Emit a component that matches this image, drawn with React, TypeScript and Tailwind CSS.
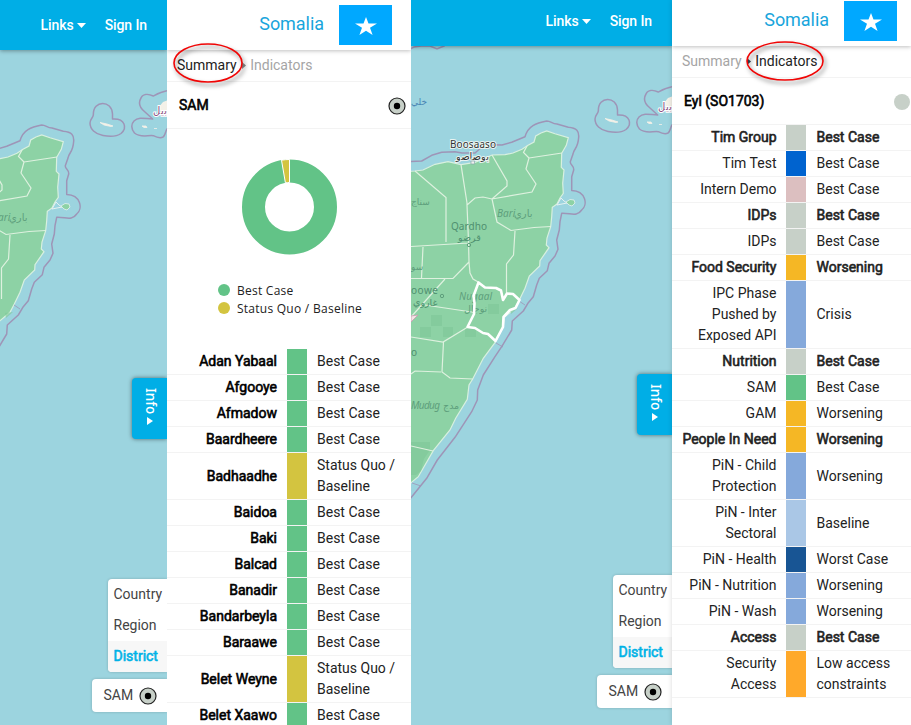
import { clsx } from "clsx";

type Row = { label: string; value: string; color: string; bold?: boolean };

const GREEN = "bg-[#62c387]";
const YELLOW = "bg-[#d3c440]";
const GREY = "bg-[#c7d0c8]";
const AMBER = "bg-[#f5b725]";
const SKY = "bg-[#85a9db]";

// Regular-weight glyphs thickened with a stroke, so bold rows keep the regular widths.
const HEAVY = "[-webkit-text-stroke:0.6px_currentColor]";

const best = (label: string): Row => ({ label, value: "Best Case", color: GREEN });

const districts: Row[] = [
  best("Adan Yabaal"),
  best("Afgooye"),
  best("Afmadow"),
  best("Baardheere"),
  { label: "Badhaadhe", value: "Status Quo /\nBaseline", color: YELLOW },
  best("Baidoa"),
  best("Baki"),
  best("Balcad"),
  best("Banadir"),
  best("Bandarbeyla"),
  best("Baraawe"),
  { label: "Belet Weyne", value: "Status Quo /\nBaseline", color: YELLOW },
  best("Belet Xaawo"),
];

const indicators: Row[] = [
  { label: "Tim Group", value: "Best Case", color: GREY, bold: true },
  { label: "Tim Test", value: "Best Case", color: "bg-[#0063cf]" },
  { label: "Intern Demo", value: "Best Case", color: "bg-[#dcbfc0]" },
  { label: "IDPs", value: "Best Case", color: GREY, bold: true },
  { label: "IDPs", value: "Best Case", color: GREY },
  { label: "Food Security", value: "Worsening", color: AMBER, bold: true },
  { label: "IPC Phase\nPushed by\nExposed API", value: "Crisis", color: SKY },
  { label: "Nutrition", value: "Best Case", color: GREY, bold: true },
  { label: "SAM", value: "Best Case", color: GREEN },
  { label: "GAM", value: "Worsening", color: AMBER },
  { label: "People In Need", value: "Worsening", color: AMBER, bold: true },
  { label: "PiN - Child\nProtection", value: "Worsening", color: SKY },
  { label: "PiN - Inter\nSectoral", value: "Baseline", color: "bg-[#aac7e6]" },
  { label: "PiN - Health", value: "Worst Case", color: "bg-[#185594]" },
  { label: "PiN - Nutrition", value: "Worsening", color: SKY },
  { label: "PiN - Wash", value: "Worsening", color: SKY },
  { label: "Access", value: "Best Case", color: GREY, bold: true },
  { label: "Security\nAccess", value: "Low access\nconstraints", color: "bg-[#ffa92a]" },
];

const COAST =
  "M400 172 L415 171 423 170 435 164.3 448 161.7 461 164.7 475 162.3 485 158.3 492 155 505 154.7 513 153 522 149.3 528 145.3 534 142 535.7 136 541 133 546.7 131 555 133.7 568.3 137.7 566.3 145.3 561.7 153.3 561.3 167.3 564 170 562.7 183.3 563.3 193.3 560 198 557 204 552.3 207.3 551.7 216.7 550.7 226.7 547 238 546.3 245 549 247.7 540 260.7 539.7 266 529.3 276 525 288.3 519.3 300 515 308.3 504.3 317.3 503.3 326.7 495.7 341.7 483.3 358.3 472.7 379 469 385 467.3 399.3 455.7 418.3 450 430 433.3 450.7 418.3 476.7 411 482.7 400 490 Z";

const MARITIME =
  "M405 161.7 L421.7 161 431.7 155.3 441.7 152.3 455 151.7 462 153 475 153 482 147 495.7 144.7 502 145 511.7 142.3 525 136.7 C528 126 536 123 546.7 121 C551 121 552 124 557 124 L568.3 127.3 C577 128 579 131 578.7 137 C578 149 574 148 573 154 L570.3 161.7 C570 165 574 165 573.7 170 L571.7 176.7 571.7 190.500 C586 191 588 205 581.7 210 C577 217 571 213 561.7 213.3 L560 221.7 559.3 230 556.7 240 558 249.3 555 256 549 263.3 547.3 270.7 539.3 278.3 536.7 285 533.3 296.7 528.3 302.7 523.3 311 512.3 321 511.7 330 501.7 346.7 495 356.7 483.3 375 477.7 390 477.3 400 471.7 411.7 455 437.3 437.3 460 426.7 478.3 411 497.7 405 504";

const DISTRICT_LINES =
  "M415 171 L446 197.5 V242 M461 164.7 L467 203 V205 L468.5 241 469 262 470 273 473 279 480 283 M467 205 L475 198 483 197 492 199 532 192 536 184 526 169 529 158 523.5 152.5 527 146 M529 158 L562 153 M492 155 L507 181 507 186 492 199 497 222 511 230.5 534 227.5 551 226.5 M515 231 L513.5 255 506.5 264 V295 M411 246.5 L468.5 243 M423 247 L421.5 278 M411 278.5 H453 L469 262 M445 279 L411 317 M425 305 L475 312.5 M411 337 L443 342 467 327.5 M443.5 342 L442 372 450 378 473 379 M411 374 L415 371 441 372 M411 446 L433 451";

function MapView({ viewBox, selected }: { viewBox: string; selected?: boolean }) {
  return (
    <svg className="absolute inset-0 size-full" viewBox={viewBox} preserveAspectRatio="xMinYMin slice">
      <path d={COAST} fill="#8dd2a5" stroke="#d8f0df" strokeWidth="1.2" />
      <g fill="#7fc898" opacity="0.6">
        <path d="M431 315h11v11h-11zM420 327h11v10h-11zM443 327h10v10h-10zM465 328h11v9h-11zM488 304h11v10h-11zM510 309l8-1-7 6z" />
        <path d="M411 442h19v8l-6 9-3 12-5 4h-5z" />
      </g>
      <path d={DISTRICT_LINES} fill="none" stroke="#def1df" strokeWidth="1.2" />
      <path d="M557 205 l4-7 3 3 3 2 z" fill="#9cd4df" stroke="#e4f1f0" strokeWidth="1" />
      <path d="M566 202 l4-2.500 4 .5 1 3 -3 3 -3-1z" fill="#8dd2a5" stroke="#e4f1f0" strokeWidth="0.8" />
      <path d="M519 301l6 4M496 343l7 4M412 483l9 3" stroke="#9f96b8" strokeWidth="0.8" />
      <path d={MARITIME} fill="none" stroke="#9e95b7" strokeWidth="1.5" strokeLinejoin="round" />
      <path d="M405 52 L414 47 421 46 430 46 437 49 444 46 448 43" fill="none" stroke="#9e95b7" strokeWidth="1.5" />
      <g fill="none" stroke="#9e95b7" strokeWidth="1.5" strokeLinejoin="round">
        <path d="M598.300 111 C598 95.500 617 96 617.500 110 L617.500 115 C630 114 632.500 124 626 129.500 C621 133 616 133 608 131.500 C600 130 595 125 595 119 C595 115 598 114 598.300 111Z" />
        <path d="M674 86.500 C667 87 662 90 658.300 92 C653 89.500 648 90 646 94 C643 99 645 104 650 108 L657.700 115 C651 115 644 112 639 117 C636 120 636 125 639.500 129 C645 134 653 131 658.300 131.700 C663 134 668 135 669.500 131 C671 128 671 125 674 123" />
      </g>
      <path d="M605 118.500l7 1.500 6 2-2 .5-7-1.500zM647 122l4 0 1 1.500-3 0zM659 124.500h3" fill="#f4f1e8" stroke="#f4f1e8" strokeWidth="0.8" />
      <path d="M664 103l4-5 5-2v11h-10z" fill="#f4f1e8" />
      <g fontFamily="'Noto Sans', 'DejaVu Sans', sans-serif" fill="#5e9f7c" fontSize="10">
        <text x="658" y="110" fill="#8c4e80" stroke="#fff" strokeWidth="2" paintOrder="stroke" textLength="14">بيل</text>
        <text x="497" y="217" fontStyle="italic">Bari</text>
        <text x="514" y="217">باري</text>
      </g>
      {selected && (
        <>
          <path d="M411 316l7-1-7 7z" fill="#f3e5e5" stroke="#c99ab0" strokeWidth="0.8" />
          <g fontFamily="'Noto Sans', 'DejaVu Sans', sans-serif" fill="#5e9f7c" fontSize="10">
            <text x="411" y="105" fill="#4a86b5" fontSize="9">خلي</text>
            <text x="450" y="147.500" fill="#333" stroke="#e8f3f2" strokeWidth="2" paintOrder="stroke" textLength="46">Boosaaso</text>
            <text x="456" y="160" fill="#333" stroke="#e8f3f2" strokeWidth="2" paintOrder="stroke" textLength="33">بوصاصو</text>
            <rect x="471" y="161" width="3.500" height="3" fill="#eee" stroke="#8aa" strokeWidth="0.700" />
            <text x="411" y="205" fontSize="9">سناج</text>
            <text x="451" y="229.500" fill="#4f9070" textLength="36">Qardho</text>
            <text x="458" y="241" fill="#4f9070" fontSize="9.500">قرضو</text>
            <circle cx="469" cy="245" r="1.700" fill="none" stroke="#5e9f7c" />
            <text x="411" y="270" fontSize="9">سو</text>
            <text x="411" y="294" fill="#4f9070" textLength="27">oowe</text>
            <text x="413" y="306" fill="#4f9070" fontSize="9.500">غاروي</text>
            <circle cx="442" cy="296" r="1.700" fill="none" stroke="#5e9f7c" />
            <text x="459" y="300" fontStyle="italic" textLength="33">Nugaal</text>
            <text x="464" y="312" fontSize="9.500">نوجال</text>
            <text x="411" y="355.500" fill="#4f9070">o</text>
            <text x="411" y="409" fontStyle="italic" textLength="29">Mudug</text>
            <text x="443" y="409" fontSize="9.500">مدج</text>
          </g>
          <path
            d="M478.500 282.500 L485 287.500 496 288 501 290.500 503 300 507 293.500 513 294 519.500 300 515.500 308 510 310 503.500 317 503 327 495.500 341 488 334 483 333 475 328 467.500 327 474 314 474.500 303 473.500 296 Z"
            fill="none"
            stroke="#fff"
            strokeWidth="2.600"
            strokeLinejoin="round"
          />
        </>
      )}
    </svg>
  );
}

function TargetDot() {
  return (
    <svg className="size-[18px] shrink-0" viewBox="0 0 18 18">
      <circle cx="9" cy="9" r="8" fill="#c7d0c8" stroke="#222" strokeWidth="1.200" />
      <circle cx="9" cy="9" r="3.200" fill="#000" />
    </svg>
  );
}

function MapColumn({ right }: { right?: boolean }) {
  return (
    <section className={clsx("flex shrink-0 flex-col", right ? "w-[261px]" : "w-[167px]")}>
      <nav
        className={clsx(
          "z-10 flex shrink-0 items-center justify-end gap-[19px] bg-[#00aee6] pr-5 text-[14px] font-medium text-white shadow-[0_1px_4px_rgba(0,0,0,0.35)]",
          right ? "h-[46px] pb-1" : "h-[50px]",
        )}
      >
        <span className="flex items-center gap-[3px] tracking-[-0.05px]">
          Links
          <svg className="h-[5px] w-[9px]" viewBox="0 0 9 5"><path d="M0 0h9L4.500 5z" fill="#fff" /></svg>
        </span>
        <span className="tracking-[-0.1px]">Sign In</span>
      </nav>
      <div className="relative flex flex-1 flex-col items-end overflow-hidden bg-[#9cd4df]">
        <MapView viewBox={right ? "411 46 261 679" : "505 46 167 675"} selected={right} />
        <div className="relative mt-[328px] flex h-[61px] w-[35px] items-center gap-px rounded-l-[4px] bg-[#00aee6] pt-[10px] pl-[2px] font-['Noto_Sans',sans-serif] text-[13.500px] text-white shadow-[0_0_4px_rgba(0,0,0,0.5)] [writing-mode:vertical-rl]">
          <span className="leading-none font-medium">Info</span>
          <svg className="mt-[2px] mr-[2px] h-[8px] w-[6px]" viewBox="0 0 6 8"><path d="M0 0v8l6-4z" fill="#fff" /></svg>
        </div>
        <div className="relative mt-[140px] w-[59px] overflow-hidden rounded-l-[4px] bg-white text-[14px] text-[#444] shadow-[0_0_3px_rgba(0,0,0,0.2)]">
          <div className="h-[31px] pl-[5.500px] leading-[31px]">Country</div>
          <div className="h-[31px] pl-[5.500px] leading-[31px]">Region</div>
          <div className={clsx("h-[31px] bg-[#f7f7f7] pl-[5.500px] leading-[31px] text-[#00b2e6]", HEAVY)}>District</div>
        </div>
        <div className="relative mt-[7px] flex h-[33px] w-[75px] items-center gap-[6px] rounded-l-[4px] bg-white pl-[11.500px] text-[14px] text-[#444] shadow-[0_0_3px_rgba(0,0,0,0.2)]">
          SAM
          <TargetDot />
        </div>
      </div>
    </section>
  );
}

function PanelHeader({ right }: { right?: boolean }) {
  return (
    <header
      className={clsx(
        "z-10 flex shrink-0 items-start justify-end gap-[15px] bg-white shadow-[0_1px_4px_rgba(0,0,0,0.25)]",
        right ? "h-[46px] pt-px pr-[14px]" : "h-[50px] pt-[5px] pr-[19px]",
      )}
    >
      <h1 className="text-[18px] leading-[38px] tracking-[-0.05px] text-[#18a5dc]">Somalia</h1>
      <div className="flex h-10 w-[53px] items-center justify-center bg-[#00a8ff]">
        <svg className="mt-0.5 h-[18px] w-[22px]" viewBox="0 0 22 18">
          <path d="M11 0l2.500 6.500H22l-7 4.300L17.600 18 11 13.700 4.400 18 7 10.800 0 6.500h8.500z" fill="#fff" />
        </svg>
      </div>
    </header>
  );
}

function Breadcrumbs({ right }: { right?: boolean }) {
  return (
    <div className="relative z-20 flex h-8 shrink-0 items-center border-b border-[#f3f3f3] pl-[10px] text-[14px]">
      <span className={right ? "text-[#a5a5a5]" : "text-[#222]"}>Summary</span>
      <svg className="mr-[4.500px] ml-[5px] h-[7px] w-[4px]" viewBox="0 0 4 7">
        <path d="M0 0l4 3.500L0 7z" fill={right ? "#345" : "#888"} />
      </svg>
      <span className={right ? "text-[#222]" : "text-[#a5a5a5]"}>Indicators</span>
      <svg
        className={clsx(
          "absolute z-20 h-[44px] overflow-visible drop-shadow-[2px_3px_2px_rgba(0,0,0,0.5)]",
          right ? "-top-[7px] left-[73px] w-[80px]" : "-top-[9.500px] left-[5px] w-[72px]",
        )}
      >
        <ellipse cx="50%" cy="22" rx={right ? 38 : 34} ry="19" fill="none" stroke="#f00505" strokeWidth="1.600" />
      </svg>
    </div>
  );
}

function RowTable({ rows, labelClass, boldLabels }: { rows: Row[]; labelClass: string; boldLabels?: boolean }) {
  return (
    <div className="text-[14px] leading-[21px] whitespace-pre-line text-[#222]">
      {rows.map((row, i) => (
        <div key={i} className="flex border-b border-[#f3f3f3]">
          <div
            className={clsx(
              "flex shrink-0 items-center justify-end py-0.5 text-right",
              boldLabels ? "pr-[10px]" : "pr-[9.500px]",
              labelClass,
              (boldLabels || row.bold) && HEAVY,
              boldLabels && "text-black",
            )}
          >
            {row.label}
          </div>
          <div className={clsx("w-5 shrink-0", row.color)} />
          <div className={clsx("flex items-center py-0.5", boldLabels ? "pl-[10px]" : "pl-[10.500px]", row.bold && HEAVY)}>
            {row.value}
          </div>
        </div>
      ))}
    </div>
  );
}

function Donut() {
  return (
    <svg className="size-[96px]" viewBox="-48.500 -48 96 96">
      <circle r="36" fill="none" stroke="#62c387" strokeWidth="23" />
      <path d="M0 -47.500 A47.500 47.500 0 0 0 -8 -46.800 L-4.100 -24.200 A24.500 24.500 0 0 1 0 -24.500Z" fill="#d3c440" stroke="#fff" strokeWidth="1" />
    </svg>
  );
}

export default function App() {
  return (
    <main className="flex h-[725px] w-[911px] overflow-hidden bg-white font-[Roboto,sans-serif]">
      <MapColumn />
      <section className="z-20 flex w-[244px] shrink-0 flex-col overflow-hidden bg-white">
        <PanelHeader />
        <Breadcrumbs />
        <div className="flex h-[47px] shrink-0 items-center justify-between border-b border-[#f3f3f3] pt-px pr-[5px] pl-3 text-[14px]">
          <span className={HEAVY}>SAM</span>
          <TargetDot />
        </div>
        <div className="flex h-[220px] shrink-0 flex-col items-center pt-[30px]">
          <Donut />
          <ul className="mt-[27px] ml-[2px] font-['Open_Sans',sans-serif] text-[12px] leading-[18px] tracking-[0.27px] text-[#222]">
            <li className="flex items-center gap-[7px]">
              <span className="mb-0.5 size-3 rounded-full bg-[#62c387]" />
              Best Case
            </li>
            <li className="flex items-center gap-[7px]">
              <span className="mb-0.5 size-3 rounded-full bg-[#d3c440]" />
              Status Quo / Baseline
            </li>
          </ul>
        </div>
        <RowTable rows={districts} labelClass="w-[120px]" boldLabels />
      </section>
      <MapColumn right />
      <section className="z-20 flex w-[239px] shrink-0 flex-col overflow-hidden bg-white shadow-[0_0_5px_rgba(0,0,0,0.15)]">
        <PanelHeader right />
        <Breadcrumbs right />
        <div className="flex h-[47px] shrink-0 items-center justify-between border-b border-[#f3f3f3] pl-3 text-[14px]">
          <span className={HEAVY}>Eyl (SO1703)</span>
          <span className="mt-px mr-px size-4 rounded-full bg-[#c7d0c8]" />
        </div>
        <RowTable rows={indicators} labelClass="w-[114px]" />
      </section>
    </main>
  );
}
